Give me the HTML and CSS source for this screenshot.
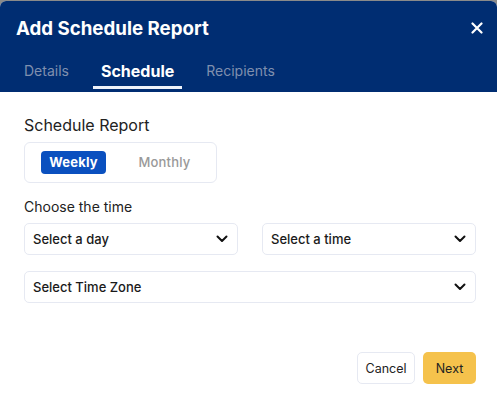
FILE: index.html
```html
<!DOCTYPE html>
<html>
<head>
<meta charset="utf-8">
<link rel="stylesheet" href="styles.css">
</head>
<body>
<div class="modal">
  <div class="header">
    <div class="title-row">
      <h1 class="title">Add Schedule Report</h1>
      <button class="close" aria-label="Close">
        <svg width="12" height="12" viewBox="0 0 12 12"><path d="M1.5 1.5 L10.5 10.5 M10.5 1.5 L1.5 10.5" stroke="#fff" stroke-width="2.2" stroke-linecap="round"/></svg>
      </button>
    </div>
    <div class="tabs">
      <div class="tab">Details</div>
      <div class="tab active">Schedule</div>
      <div class="tab">Recipients</div>
    </div>
  </div>
  <div class="body">
    <div class="section-title">Schedule Report</div>
    <div class="toggle">
      <span class="opt on">Weekly</span>
      <span class="opt">Monthly</span>
    </div>
    <div class="label">Choose the time</div>
    <div class="row">
      <div class="select"><span>Select a day</span><svg class="chev" width="12" height="8" viewBox="0 0 12 8"><path d="M1.5 1.5 L6 6 L10.5 1.5" fill="none" stroke="#111" stroke-width="2" stroke-linecap="round" stroke-linejoin="round"/></svg></div>
      <div class="select"><span>Select a time</span><svg class="chev" width="12" height="8" viewBox="0 0 12 8"><path d="M1.5 1.5 L6 6 L10.5 1.5" fill="none" stroke="#111" stroke-width="2" stroke-linecap="round" stroke-linejoin="round"/></svg></div>
    </div>
    <div class="select wide"><span>Select Time Zone</span><svg class="chev" width="12" height="8" viewBox="0 0 12 8"><path d="M1.5 1.5 L6 6 L10.5 1.5" fill="none" stroke="#111" stroke-width="2" stroke-linecap="round" stroke-linejoin="round"/></svg></div>
    <div class="footer">
      <button class="btn cancel">Cancel</button>
      <button class="btn next">Next</button>
    </div>
  </div>
</div>
</body>
</html>
```
FILE: styles.css
```css
* { box-sizing: border-box; }
html, body { margin: 0; padding: 0; }
body {
  background: #8a8a8a;
  font-family: Inter, "Noto Sans", sans-serif;
  width: 497px;
  height: 407px;
  overflow: hidden;
}
.modal {
  margin-top: 1px;
  background: #fff;
  border-radius: 6px 6px 0 0;
  overflow: hidden;
  height: 406px;
}
.header {
  background: #002d72;
  color: #fff;
  height: 91px;
  display: flex;
  flex-direction: column;
}
.title-row {
  display: flex;
  align-items: center;
  justify-content: space-between;
  height: 54px;
  padding: 0 13px 0 16px;
}
.title {
  margin: 0;
  font-size: 18.7px;
  font-weight: 700;
}
.close {
  background: none;
  border: 0;
  padding: 0;
  width: 14px;
  height: 14px;
  display: flex;
  align-items: center;
  justify-content: center;
}
.tabs {
  display: flex;
  gap: 16px;
  padding-left: 16px;
  flex: 1;
}
.tab {
  padding: 0 8px;
  font-size: 14px;
  color: #7f8fae;
  display: flex;
  align-items: center;
  height: 34px;
  border-bottom: 3px solid transparent;
}
.tab.active {
  color: #fff;
  font-size: 16px;
  font-weight: 700;
  border-bottom-color: #eef2fa;
}
.body {
  padding: 24px 21px 0 24px;
  display: flex;
  flex-direction: column;
}
.section-title {
  font-size: 16px;
  color: #222;
  line-height: 18px;
}
.toggle {
  margin-top: 8px;
  width: 193px;
  height: 41px;
  border: 1px solid #e6e9f2;
  border-radius: 6px;
  display: flex;
  align-items: center;
  padding-left: 16px;
  gap: 26px;
}
.opt {
  font-size: 13px;
  font-weight: 500;
  color: #999;
  height: 23px;
  line-height: 23px;
  border-radius: 4px;
  width: 65px;
  text-align: center;
  flex: none;
  letter-spacing: 0.2px;
}
.opt.on {
  background: #0a50bf;
  color: #fff;
  font-weight: 700;
}
.label {
  margin-top: 16px;
  font-size: 14px;
  color: #222;
  line-height: 16px;
}
.row {
  margin-top: 8px;
  display: flex;
  gap: 24px;
}
.select {
  flex: 1;
  height: 32px;
  border: 1px solid #e6e9f2;
  border-radius: 5px;
  display: flex;
  align-items: center;
  justify-content: space-between;
  padding: 0 9px 0 8px;
  font-size: 13px;
  font-weight: 500;
  color: #1a1a1a;
}
.select.wide {
  margin-top: 16px;
  flex: none;
}
.footer {
  margin-top: 49px;
  display: flex;
  justify-content: flex-end;
  gap: 8px;
}
.btn {
  font-family: inherit;
  font-size: 12.5px;
  height: 32px;
  border-radius: 5px;
  color: #222;
  padding: 0;
}
.cancel {
  width: 58px;
  background: #fff;
  border: 1px solid #e6e9f2;
}
.next {
  width: 53px;
  background: #f5c24c;
  border: 0;
}
```
